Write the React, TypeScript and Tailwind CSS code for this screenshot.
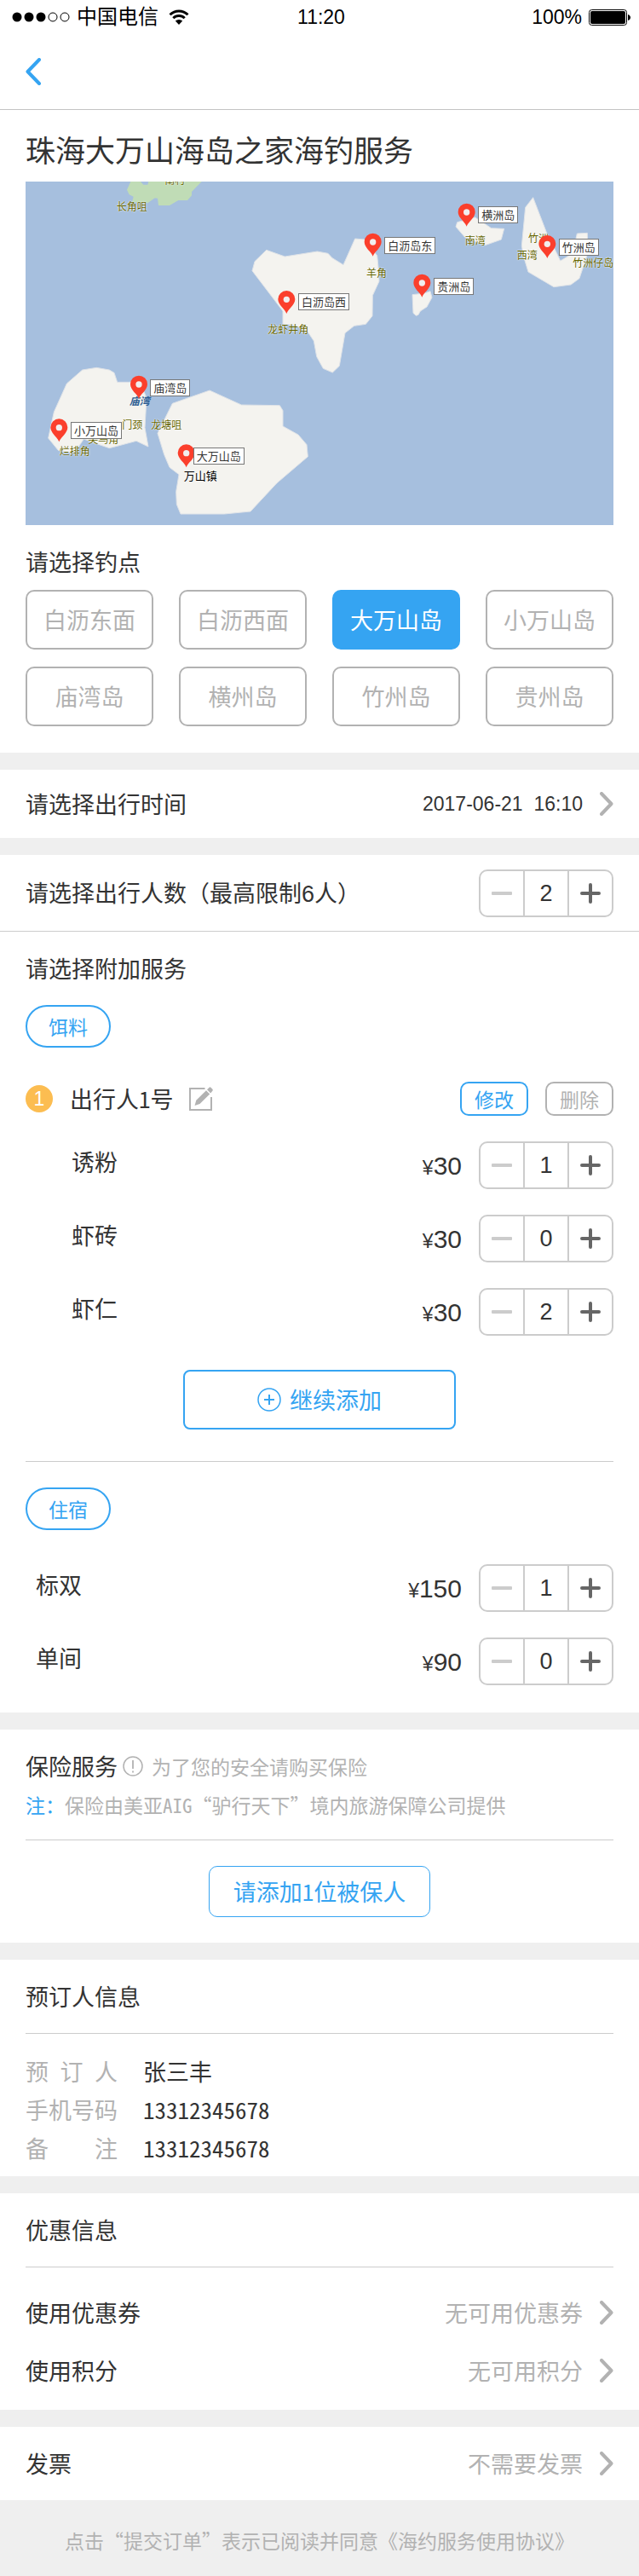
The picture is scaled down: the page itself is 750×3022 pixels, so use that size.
import { useState } from "react";
import type { ReactNode } from "react";

const SPOTS = ["白沥东面", "白沥西面", "大万山岛", "小万山岛", "庙湾岛", "横州岛", "竹州岛", "贵州岛"];

// Map geometry shares one coordinate space: x 90..2160, y 39..1248.
const MAP = { x: 90, y: 39, w: 2070, h: 1209 };

const LANDS = [
  "938,280 1003,303 1117,285 1155,292 1170,308 1209,332 1250,240 1285,243 1328,300 1332,340 1335,390 1312,440 1311,512 1288,541 1247,547 1215,572 1195,688 1171,711 1138,697 1122,668 1115,655 1105,600 1085,570 1040,545 996,540 996,495 888,353 897,320",
  "340,694 385,702 402,712 413,745 455,745 490,738 516,800 510,905 522,972 480,952 420,968 385,977 350,965 295,945 275,975 255,995 205,985 170,942 190,850 235,750 290,702",
  "738,774 850,825 985,827 996,845 996,900 1050,930 1080,965 1084,1007 975,1100 882,1200 790,1209 636,1209 622,1175 620,1130 630,1070 597,1045 578,1000 555,925 607,820",
  "1610,182 1605,198 1637,235 1708,263 1765,243 1775,205 1730,203 1673,165",
  "1877,95 1850,130 1837,265 1843,300 1860,357 1950,410 2010,402 2040,380 2055,335 2070,290 2068,220 2032,222 2028,240 2020,290 1973,318 1960,290 1925,220",
  "1452,437 1455,502 1465,511 1473,508 1480,495 1503,480 1521,447 1515,425 1495,432",
];

const PINS = [
  [1009, 504],
  [489, 803],
  [208, 955],
  [656, 1045],
  [1313, 302],
  [1643, 197],
  [1927, 309],
  [1486, 446],
];

const TAGS: [string, number, number][] = [
  ["白沥岛西", 1050, 433],
  ["庙湾岛", 529, 735],
  ["小万山岛", 249, 885],
  ["大万山岛", 680, 975],
  ["白沥岛东", 1354, 233],
  ["横洲岛", 1684, 127],
  ["竹洲岛", 1967, 241],
  ["贵洲岛", 1528, 377],
];

const PLACES: [string, number, number][] = [
  ["南村", 580, 3],
  ["长角咀", 410, 95],
  ["龙虾井角", 943, 529],
  ["门颈", 430, 863],
  ["龙塘咀", 532, 863],
  ["尖鸟角", 310, 914],
  ["烂排角", 209, 957],
  ["羊角", 1290, 331],
  ["南湾", 1637, 215],
  ["竹洲", 1860, 208],
  ["西湾", 1820, 268],
  ["竹洲仔岛", 2017, 295],
];

function place(x: number, y: number) {
  return { left: `${((x - MAP.x) / MAP.w) * 100}%`, top: `${((y - MAP.y) / MAP.h) * 100}%` };
}

function IslandMap() {
  const halo = "[text-shadow:0_0_2px_#fff,0_0_1px_#fff]";
  return (
    <div className="relative overflow-hidden bg-[#a6bfde]">
      <svg viewBox="90 39 2070 1209" className="block w-full" aria-hidden="true">
        <polygon
          fill="#c0dcb6"
          points="460,39 447,68 455,85 470,92 465,112 520,115 545,97 555,98 558,123 597,123 628,105 660,105 675,88 675,75 710,39 523,39 520,50 505,50 495,39"
        />
        {LANDS.map((points) => (
          <polygon key={points} points={points} fill="#f4f3ef" stroke="#dfe3e8" strokeWidth="3" />
        ))}
      </svg>
      {PLACES.map(([name, x, y]) => (
        <span
          key={name}
          className={`absolute whitespace-nowrap text-[12px] leading-5 font-medium text-[#666600] ${halo}`}
          style={place(x, y)}
        >
          {name}
        </span>
      ))}
      <span
        className="absolute whitespace-nowrap text-[12px] leading-5 font-bold text-[#2f5f94] italic"
        style={place(455, 781)}
      >
        庙湾
      </span>
      <span
        className={`absolute whitespace-nowrap text-[13px] leading-5 text-black ${halo}`}
        style={place(647, 1045)}
      >
        万山镇
      </span>
      <svg viewBox="90 39 2070 1209" className="absolute inset-0 w-full" aria-hidden="true">
        {PINS.map(([x, y]) => (
          <g key={x} transform={`translate(${x} ${y})`}>
            <path d="M0 0C-5 -16 -30 -30 -30 -51A30 30 0 1 1 30 -51C30 -30 5 -16 0 0Z" fill="#fb3f2c" />
            <circle cy="-50" r="11" fill="#f1eeee" />
          </g>
        ))}
      </svg>
      {TAGS.map(([name, x, y]) => (
        <span
          key={name}
          className="absolute border border-[#777] bg-white px-[3px] text-[13px] leading-[18px] whitespace-nowrap text-[#333]"
          style={place(x, y)}
        >
          {name}
        </span>
      ))}
    </div>
  );
}

function Chevron() {
  return (
    <svg viewBox="0 0 16 28" className="h-7 w-4 shrink-0" aria-hidden="true">
      <path d="M2 2L13.5 14L2 26" fill="none" stroke="#b2b2b2" strokeWidth="4" strokeLinecap="round" strokeLinejoin="round" />
    </svg>
  );
}

function Stepper({ label, initial, max = 99 }: { label: string; initial: number; max?: number }) {
  const [value, setValue] = useState(initial);
  return (
    <div
      role="group"
      aria-label={label}
      className="flex h-14 w-[158px] shrink-0 divide-x-2 divide-[#ccc] overflow-hidden rounded-[10px] border-2 border-[#ccc]"
    >
      <button
        type="button"
        aria-label="减少"
        className="flex flex-1 items-center justify-center"
        onClick={() => setValue(Math.max(0, value - 1))}
      >
        <svg viewBox="0 0 24 24" className="size-6">
          <rect y="10" width="24" height="4" rx="1" fill="#ccc" />
        </svg>
      </button>
      <output className="flex flex-1 items-center justify-center font-['Liberation_Sans'] text-[27px] text-[#333]">
        {value}
      </output>
      <button
        type="button"
        aria-label="增加"
        className="flex flex-1 items-center justify-center"
        onClick={() => setValue(Math.min(max, value + 1))}
      >
        <svg viewBox="0 0 24 24" className="size-6">
          <path d="M2 12H22M12 2V22" stroke="#666" strokeWidth="4" strokeLinecap="round" />
        </svg>
      </button>
    </div>
  );
}

function ItemRow({ name, price, count }: { name: string; price: number; count: number }) {
  return (
    <li className="flex items-center gap-5">
      <span className="mr-auto pb-2">{name}</span>
      <span className="flex items-baseline pt-1 font-['Liberation_Sans'] leading-10">
        <span className="text-[23px]">¥</span>
        <span className="text-[30px]">{price}</span>
      </span>
      <Stepper label={name} initial={count} />
    </li>
  );
}

function Pill({ children }: { children: ReactNode }) {
  return (
    <button
      type="button"
      className="flex h-[50px] w-[100px] items-center justify-center rounded-full border-2 border-[#35a4f2] text-[23px] text-[#35a4f2]"
    >
      {children}
    </button>
  );
}

function LinkRow({ label, value, className }: { label: string; value: string; className: string }) {
  return (
    <button type="button" className={`flex w-full items-center text-left ${className}`}>
      <span className="mr-auto">{label}</span>
      <span className="mr-5 text-[#b2b2b2]">{value}</span>
      <Chevron />
    </button>
  );
}

function Field({ label, value }: { label: string; value: string }) {
  return (
    <div className="flex leading-[45px]">
      <dt className="mr-[30px] flex w-[108px] justify-between text-[#b2b2b2]">
        {label.split("").map((char) => (
          <span key={char}>{char}</span>
        ))}
      </dt>
      <dd>{value}</dd>
    </div>
  );
}

function StatusBar() {
  return (
    <div className="grid h-10 grid-cols-3 items-center pr-[10px] pl-[14px] font-['Liberation_Sans','Noto_Sans_CJK_SC',sans-serif] text-[23px] text-black">
      <div className="flex items-center">
        <svg viewBox="0 0 68 12" className="h-3 w-[68px]" aria-hidden="true">
          <circle cx="6" cy="6" r="5.5" />
          <circle cx="20" cy="6" r="5.5" />
          <circle cx="34" cy="6" r="5.5" />
          <circle cx="48" cy="6" r="5" fill="none" stroke="#000" />
          <circle cx="62" cy="6" r="5" fill="none" stroke="#000" />
        </svg>
        <span className="ml-2 text-[24px]">中国电信</span>
        <svg viewBox="0 0 24 18" className="ml-3 h-[18px] w-6" aria-hidden="true">
          <path d="M1.5 6.2A15 15 0 0 1 22.5 6.2M5.3 10.2A9.6 9.6 0 0 1 18.7 10.2" fill="none" stroke="#000" strokeWidth="3" />
          <path d="M12 18L7.8 13.6A6 6 0 0 1 16.2 13.6Z" />
        </svg>
      </div>
      <span className="text-center">11:20</span>
      <div className="flex items-center justify-end gap-2">
        <span>100%</span>
        <svg viewBox="0 0 49 19" className="h-[19px] w-[49px]" aria-hidden="true">
          <rect x="0.5" y="0.5" width="44" height="18" rx="3" fill="none" stroke="#000" />
          <rect x="2" y="2" width="41" height="15" rx="2" />
          <path d="M46 6C48 6.500 49 8 49 9.500C49 11 48 12.500 46 13Z" />
        </svg>
      </div>
    </div>
  );
}

export default function App() {
  const [spot, setSpot] = useState("大万山岛");
  return (
    <div
      lang="zh-CN"
      className="flex min-h-screen flex-col bg-[#efefef] font-['Noto_Sans_Mono_CJK_SC','Noto_Sans_CJK_SC',sans-serif] text-[27px] leading-10 text-[#333]"
    >
      <header className="bg-white">
        <StatusBar />
        <nav className="flex h-[89px] items-center border-b border-[#c4c4c4] px-[30px]">
          <a href="#back" aria-label="返回">
            <svg viewBox="0 0 18 32" className="h-8 w-[18px]" aria-hidden="true">
              <path d="M16 2L2.500 16L16 30" fill="none" stroke="#35a4f2" strokeWidth="4" strokeLinecap="round" strokeLinejoin="round" />
            </svg>
          </a>
        </nav>
      </header>

      <main className="flex flex-col gap-5">
        <section className="bg-white px-[30px] pt-5 pb-[31px]">
          <h1 className="mb-3 text-[35px] leading-[52px]">珠海大万山海岛之家海钓服务</h1>
          <IslandMap />
          <h2 className="mt-[23px]">请选择钓点</h2>
          <div className="mt-[13px] grid grid-cols-4 gap-x-[30px] gap-y-5">
            {SPOTS.map((name) => (
              <button
                key={name}
                type="button"
                aria-pressed={name === spot}
                onClick={() => setSpot(name)}
                className={`h-[70px] rounded-[10px] border-2 ${
                  name === spot ? "border-[#35a4f2] bg-[#35a4f2] text-white" : "border-[#b2b2b2] text-[#b2b2b2]"
                }`}
              >
                {name}
              </button>
            ))}
          </div>
        </section>

        <section className="bg-white">
          <button type="button" className="flex h-20 w-full items-center px-[30px]">
            <span className="mr-auto">请选择出行时间</span>
            <time className="mr-5 font-['Liberation_Sans'] text-[23px] whitespace-pre">2017-06-21{"  "}16:10</time>
            <Chevron />
          </button>
        </section>

        <section className="bg-white pb-8">
          <div className="flex h-[90px] items-center justify-between border-b border-[#ccc] px-[30px]">
            <h2>
              请选择出行人数（最高限制<span className="font-['Liberation_Sans']">6</span>人）
            </h2>
            <Stepper label="出行人数" initial={2} max={6} />
          </div>
          <div className="px-[30px] pt-[23px]">
            <h2 className="mb-[23px]">请选择附加服务</h2>
            <Pill>饵料</Pill>
            <div className="mt-10 flex items-center">
              <span className="flex size-8 items-center justify-center rounded-full bg-[#fcbd51] font-['Liberation_Sans'] text-[23px] text-white">
                1
              </span>
              <h3 className="ml-5">出行人1号</h3>
              <button type="button" aria-label="编辑" className="mr-auto ml-[18px]">
                <svg viewBox="0 0 28 28" className="size-7" aria-hidden="true">
                  <path d="M18.500 2H1V27H26V12" fill="none" stroke="#b2b2b2" strokeWidth="2" />
                  <path d="M6.500 22L8.300 15.800L20 4.200L24.200 8.400L12.500 20Z M21 3.200L23.500 0.700Q24.500 0 25.500 0.800L27.400 2.700Q28.200 3.700 27.400 4.700L25.200 7.400Z" fill="#b2b2b2" />
                </svg>
              </button>
              <button type="button" className="flex h-10 w-20 items-center justify-center rounded-[10px] border-2 border-[#35a4f2] text-[23px] text-[#35a4f2]">
                修改
              </button>
              <button type="button" className="ml-5 flex h-10 w-20 items-center justify-center rounded-[10px] border-2 border-[#b2b2b2] text-[23px] text-[#b2b2b2]">
                删除
              </button>
            </div>
            <ul className="mt-[30px] flex flex-col gap-[30px] pl-[54px]">
              <ItemRow name="诱粉" price={30} count={1} />
              <ItemRow name="虾砖" price={30} count={0} />
              <ItemRow name="虾仁" price={30} count={2} />
            </ul>
            <button
              type="button"
              className="mx-auto mt-10 flex h-[70px] w-80 items-center justify-center gap-[10px] rounded-lg border-2 border-[#35a4f2] text-[#35a4f2]"
            >
              <svg viewBox="0 0 28 28" className="size-7" aria-hidden="true">
                <path d="M8 14H20M14 8V20" stroke="#35a4f2" strokeWidth="2" />
                <circle cx="14" cy="14" r="13" fill="none" stroke="#35a4f2" strokeWidth="1.500" />
              </svg>
              继续添加
            </button>
            <hr className="mt-[37px] mb-[30px] border-[#ccc]" />
            <Pill>住宿</Pill>
            <ul className="mt-10 flex flex-col gap-[30px] pl-3">
              <ItemRow name="标双" price={150} count={1} />
              <ItemRow name="单间" price={90} count={0} />
            </ul>
          </div>
        </section>

        <section className="bg-white px-[30px] pt-[23px] pb-[30px]">
          <div className="flex items-center">
            <h2>保险服务</h2>
            <svg viewBox="0 0 24 24" className="mx-1.5 size-6" aria-hidden="true">
              <circle cx="12" cy="12" r="11" fill="none" stroke="#b2b2b2" strokeWidth="1.500" />
              <path d="M12 5V15M12 17.500V19.500" stroke="#b2b2b2" strokeWidth="1.800" />
            </svg>
            <span className="ml-1 text-[23px] text-[#b2b2b2]">为了您的安全请购买保险</span>
          </div>
          <p className="mt-[5px] text-[23px] text-[#b2b2b2]">
            <span className="text-[#35a4f2]">注：</span>保险由美亚AIG“驴行天下”境内旅游保障公司提供
          </p>
          <hr className="mt-[21px] mb-[30px] border-[#ccc]" />
          <button
            type="button"
            className="mx-auto flex h-[60px] w-[260px] items-center justify-center rounded-[10px] border border-[#35a4f2] text-[#35a4f2]"
          >
            请添加1位被保人
          </button>
        </section>

        <section className="bg-white px-[30px] pt-[23px] pb-[11px]">
          <h2>预订人信息</h2>
          <hr className="mt-[23px] mb-[21px] border-[#ccc]" />
          <dl>
            <Field label="预订人" value="张三丰" />
            <Field label="手机号码" value="13312345678" />
            <Field label="备注" value="13312345678" />
          </dl>
        </section>

        <section className="bg-white px-[30px] pt-[23px] pb-3">
          <h2>优惠信息</h2>
          <hr className="mt-[23px] mb-[19px] border-[#ccc]" />
          <LinkRow label="使用优惠券" value="无可用优惠券" className="h-[68px]" />
          <LinkRow label="使用积分" value="无可用积分" className="h-[68px]" />
        </section>

        <section className="bg-white">
          <LinkRow label="发票" value="不需要发票" className="h-[86px] px-[30px]" />
        </section>
      </main>

      <footer className="flex h-[89px] items-center justify-center pt-1 text-[23px] text-[#b2b2b2]">
        点击“提交订单”表示已阅读并同意《海约服务使用协议》
      </footer>
    </div>
  );
}
